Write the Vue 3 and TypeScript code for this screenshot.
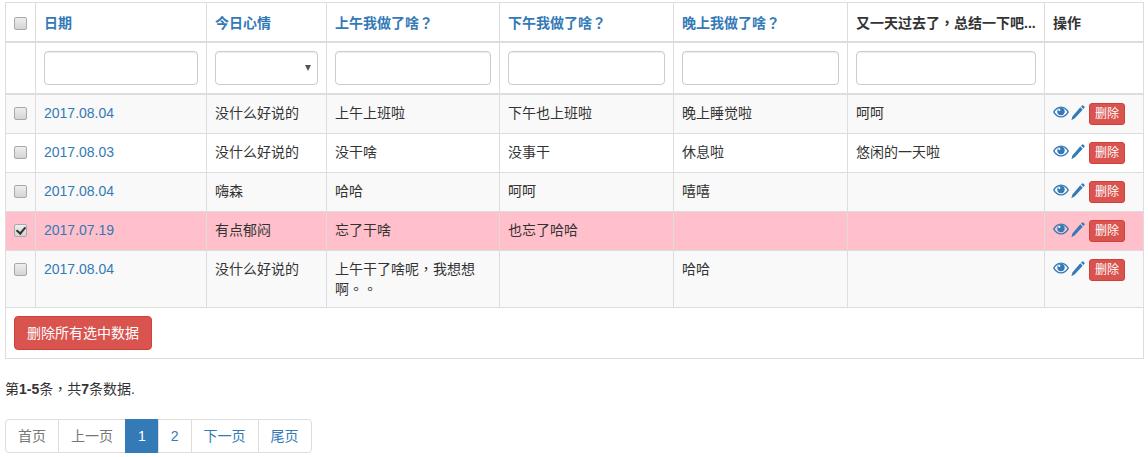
<script setup lang="ts">
interface Row {
  date: string
  mood: string
  am: string
  pm: string
  night: string
  sum: string
  checked?: boolean
}

const heads = [
  { text: '日期', link: true },
  { text: '今日心情', link: true },
  { text: '上午我做了啥？', link: true },
  { text: '下午我做了啥？', link: true },
  { text: '晚上我做了啥？', link: true },
  { text: '又一天过去了，总结一下吧...', link: false },
  { text: '操作', link: false },
]

const rows: Row[] = [
  { date: '2017.08.04', mood: '没什么好说的', am: '上午上班啦', pm: '下午也上班啦', night: '晚上睡觉啦', sum: '呵呵' },
  { date: '2017.08.03', mood: '没什么好说的', am: '没干啥', pm: '没事干', night: '休息啦', sum: '悠闲的一天啦' },
  { date: '2017.08.04', mood: '嗨森', am: '哈哈', pm: '呵呵', night: '嘻嘻', sum: '' },
  { date: '2017.07.19', mood: '有点郁闷', am: '忘了干啥', pm: '也忘了哈哈', night: '', sum: '', checked: true },
  { date: '2017.08.04', mood: '没什么好说的', am: '上午干了啥呢，我想想啊。。', pm: '', night: '哈哈', sum: '' },
]

const filters = ['input', 'select', 'input', 'input', 'input', 'input']
const pages = [
  { text: '首页', muted: true },
  { text: '上一页', muted: true },
  { text: '1', active: true },
  { text: '2' },
  { text: '下一页' },
  { text: '尾页' },
]

// Full-width punctuation sits centred in the reference, as in the TC font.
const parts = (s: string): string[] => s.split(/([，。？])/).filter(Boolean)
const isPunct = (s: string): boolean => /^[，。？]$/.test(s)
</script>

<template>
  <div class="page">
    <div class="grid">
      <table class="table">
        <colgroup>
          <col class="c0" /><col class="c1" /><col class="c2" /><col class="c3" />
          <col class="c4" /><col class="c5" /><col class="c6" /><col class="c7" />
        </colgroup>
        <thead>
          <tr class="head">
            <th><input type="checkbox" class="check" /></th>
            <th v-for="h in heads" :key="h.text">
              <a v-if="h.link" class="link"><span v-for="(p, k) in parts(h.text)" :key="k" :class="{ punct: isPunct(p) }">{{ p }}</span></a>
              <span v-else class="clip"><span v-for="(p, k) in parts(h.text)" :key="k" :class="{ punct: isPunct(p) }">{{ p }}</span></span>
            </th>
          </tr>
          <tr class="filters">
            <td></td>
            <td v-for="(f, i) in filters" :key="i">
              <input v-if="f === 'input'" class="control" type="text" />
              <div v-else class="select-wrap"><select class="control select"></select></div>
            </td>
            <td></td>
          </tr>
        </thead>
        <tbody>
          <tr v-for="(r, i) in rows" :key="i" :class="{ striped: i % 2 === 0, picked: r.checked }">
            <td><input type="checkbox" class="check" :checked="r.checked" /></td>
            <td><a class="link plain">{{ r.date }}</a></td>
            <td>{{ r.mood }}</td>
            <td><span v-for="(p, k) in parts(r.am)" :key="k" :class="{ punct: isPunct(p) }">{{ p }}</span></td>
            <td>{{ r.pm }}</td>
            <td>{{ r.night }}</td>
            <td>{{ r.sum }}</td>
            <td class="actions">
              <svg class="icon eye" viewBox="0 0 16 14" aria-hidden="true">
                <path fill-rule="evenodd" d="M8 1.4C4.6 1.4 1.6 3.5 0 6.9c1.6 3.4 4.6 5.6 8 5.6s6.4-2.2 8-5.6C14.4 3.5 11.4 1.4 8 1.4zM8 2.7c2.7 0 5 1.7 6.4 4.2-1.4 2.5-3.7 4.3-6.4 4.3s-5-1.8-6.4-4.3C3 4.4 5.3 2.7 8 2.7z" />
                <circle cx="8" cy="6.5" r="3.7" />
                <circle cx="6.3" cy="4.9" r="1.1" fill="#fff" />
              </svg>
              <svg class="icon pencil" viewBox="0 0 14 16" aria-hidden="true">
                <path d="M11.2.5a.7.7 0 0 1 1 0l1.3 1.3a.7.7 0 0 1 0 1L12.4 4 10 1.6zM9.3 2.3l2.4 2.4-7.9 8.6L.4 15.2l1-3.7z" />
              </svg>
              <button class="btn xs">删除</button>
            </td>
          </tr>
        </tbody>
      </table>
      <div class="foot">
        <button class="btn">删除所有选中数据</button>
      </div>
    </div>

    <p class="summary">第<b>1-5</b>条<span class="punct">，</span>共<b>7</b>条数据.</p>

    <ul class="pager">
      <li v-for="p in pages" :key="p.text" :class="{ muted: p.muted, active: p.active }">{{ p.text }}</li>
    </ul>
  </div>
</template>

<style scoped>
.page {
  padding: 2px 4px 0 5px;
  font-family: "Liberation Sans", "Noto Sans CJK SC", sans-serif;
  font-size: 14px;
  line-height: 20px;
  color: #333;
}
.punct {
  font-family: "Noto Sans CJK TC", sans-serif;
  line-height: 0;
}
.grid {
  border: 1px solid #ddd;
}
.table {
  width: 100%;
  border-collapse: separate;
  border-spacing: 0;
  table-layout: fixed;
}
.c0 { width: 29px; }
.c1 { width: 171px; }
.c2 { width: 120px; }
.c3 { width: 173px; }
.c4 { width: 174px; }
.c5 { width: 174px; }
.c6 { width: 197px; }
th,
td {
  padding: 8px;
  text-align: left;
  vertical-align: top;
  border-left: 1px solid #ddd;
  border-bottom: 1px solid #ddd;
  box-sizing: border-box;
}
th:first-child,
td:first-child {
  border-left: 0;
}
.head th {
  height: 40px;
  padding: 10px 8px 8px;
  font-weight: 700;
  border-bottom-width: 2px;
  white-space: nowrap;
}
.filters td {
  height: 52px;
  border-bottom-width: 2px;
}
.link {
  color: #337ab7;
}
.clip {
  display: block;
  overflow: hidden;
  text-overflow: ellipsis;
}
.striped td {
  background: #f9f9f9;
}
.picked td {
  background: #ffc0cb;
}
.check {
  appearance: none;
  display: block;
  position: relative;
  width: 13px;
  height: 13px;
  margin: 4px 0 0;
  border: 1px solid #a9a9a9;
  border-radius: 2px;
  background: linear-gradient(#eee, #d4d4d4);
  box-sizing: border-box;
}
.check:checked::after {
  content: "";
  position: absolute;
  left: 3px;
  top: 0;
  width: 4px;
  height: 7px;
  border: solid #333;
  border-width: 0 2px 2px 0;
  transform: rotate(40deg);
}
.control {
  display: block;
  width: 100%;
  height: 34px;
  padding: 6px 12px;
  box-sizing: border-box;
  border: 1px solid #ccc;
  border-radius: 4px;
  background: #fff;
  box-shadow: inset 0 1px 1px rgba(0, 0, 0, 0.075);
  font: inherit;
}
.select {
  appearance: none;
}
.select-wrap {
  position: relative;
}
.select-wrap::after {
  content: "";
  position: absolute;
  right: 7px;
  top: 14px;
  border-style: solid;
  border-width: 6px 3px 0;
  border-color: #555 transparent transparent;
}
.actions {
  white-space: nowrap;
}
.icon {
  fill: #337ab7;
  display: inline-block;
  vertical-align: top;
}
.eye {
  width: 16px;
  height: 14px;
  margin: 2px 2px 0 0;
}
.pencil {
  width: 14px;
  height: 16px;
  margin: 2px 4px 0 0;
}
.btn {
  display: inline-block;
  height: 34px;
  padding: 6px 12px;
  font: inherit;
  color: #fff;
  background: #d9534f;
  border: 1px solid #d43f3a;
  border-radius: 4px;
  box-sizing: border-box;
}
.btn.xs {
  height: 22px;
  padding: 1px 5px;
  font-size: 12px;
  line-height: 18px;
  border-radius: 3px;
  vertical-align: top;
}
.foot {
  padding: 8px;
}
.summary {
  margin: 20px 0 0;
  height: 20px;
}
.pager {
  display: flex;
  list-style: none;
  margin: 20px 0 0;
  padding: 0;
}
.pager li {
  padding: 6px 12px;
  margin-left: -1px;
  color: #337ab7;
  background: #fff;
  border: 1px solid #ddd;
}
.pager li:first-child {
  margin-left: 0;
  border-radius: 4px 0 0 4px;
}
.pager li:last-child {
  border-radius: 0 4px 4px 0;
}
.pager li.muted {
  color: #777;
}
.pager li.active {
  color: #fff;
  background: #337ab7;
  border-color: #337ab7;
}
</style>
